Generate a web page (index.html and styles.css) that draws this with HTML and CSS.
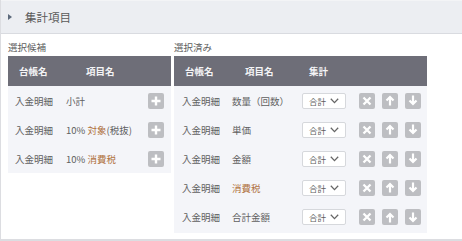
FILE: index.html
```html
<!DOCTYPE html>
<html>
<head>
    <title>集計項目</title>
    <meta charset="utf-8">
    <link rel="stylesheet" href="styles.css">
</head>

<body>
    <div class="panel">
        <div class="panel-head"><span class="caret"></span>集計項目</div>
        <div class="panel-body">
            <div class="pick">
                <div class="pick-label">選択候補</div>
                <table class="grid candidates">
                    <colgroup>
                        <col style="width: 51px">
                        <col style="width: 81px">
                        <col style="width: 31px">
                    </colgroup>
                    <tr>
                        <th class="c-ledger">台帳名</th>
                        <th class="c-item">項目名</th>
                        <th></th>
                    </tr>
                    <tr>
                        <td>入金明細</td>
                        <td>小計</td>
                        <td class="c-add"><button class="btn" type="button"><svg width="10" height="10" viewBox="0 0 10 10"><path d="M5 0.5V9.5M0.5 5H9.5" stroke="#fff" stroke-width="2.4"/></svg></button></td>
                    </tr>
                    <tr>
                        <td>入金明細</td>
                        <td>10% <span class="hl">対象</span>(税抜)</td>
                        <td class="c-add"><button class="btn" type="button"><svg width="10" height="10" viewBox="0 0 10 10"><path d="M5 0.5V9.5M0.5 5H9.5" stroke="#fff" stroke-width="2.4"/></svg></button></td>
                    </tr>
                    <tr>
                        <td>入金明細</td>
                        <td>10% <span class="hl">消費税</span></td>
                        <td class="c-add"><button class="btn" type="button"><svg width="10" height="10" viewBox="0 0 10 10"><path d="M5 0.5V9.5M0.5 5H9.5" stroke="#fff" stroke-width="2.4"/></svg></button></td>
                    </tr>
                </table>
            </div>

            <div class="pick">
                <div class="pick-label">選択済み</div>
                <table class="grid selected" id="selectedTable">
                    <colgroup>
                        <col style="width: 50px">
                        <col style="width: 70px">
                        <col style="width: 61px">
                        <col style="width: 72px">
                    </colgroup>
                    <tr>
                        <th class="c-ledger">台帳名</th>
                        <th class="c-item2">項目名</th>
                        <th class="c-sum">集計</th>
                        <th></th>
                    </tr>
                </table>
            </div>
        </div>
    </div>

    <script>
        var items = [
            ['入金明細', '数量（回数）'],
            ['入金明細', '単価'],
            ['入金明細', '金額'],
            ['入金明細', '<span class="hl">消費税</span>'],
            ['入金明細', '合計金額']
        ];

        var chevron = '<svg width="9" height="6" viewBox="0 0 9 6"><path d="M0.8 0.8L4.5 4.6L8.2 0.8" fill="none" stroke="#666" stroke-width="1.3"/></svg>';
        var del = '<svg width="10" height="10" viewBox="0 0 10 10"><path d="M1.5 1.5L8.5 8.5M8.5 1.5L1.5 8.5" stroke="#fff" stroke-width="2.3"/></svg>';
        var up = '<svg width="10" height="11" viewBox="0 0 10 11"><path d="M5 10.5V2.5M1.5 5.5L5 2L8.5 5.5" fill="none" stroke="#fff" stroke-width="2.2"/></svg>';
        var down = '<svg width="10" height="11" viewBox="0 0 10 11"><path d="M5 0.5V8.5M1.5 5.5L5 9L8.5 5.5" fill="none" stroke="#fff" stroke-width="2.2"/></svg>';

        var table = document.getElementById('selectedTable');
        for (var i = 0; i < items.length; i++) {
            var row = table.insertRow(table.rows.length);
            row.insertCell(0).innerHTML = items[i][0];
            row.insertCell(1).innerHTML = items[i][1];
            var sum = row.insertCell(2);
            sum.innerHTML = '<span class="select">合計' + chevron + '</span>';
            var ops = row.insertCell(3);
            ops.className = 'c-ops';
            ops.innerHTML = '<button class="btn" type="button">' + del + '</button>'
                + '<button class="btn" type="button">' + up + '</button>'
                + '<button class="btn" type="button">' + down + '</button>';
        }
    </script>
</body>
</html>
```

FILE: styles.css
```css
body {
    margin: 0;
    font-family: "Noto Sans CJK JP", "Noto Sans", sans-serif;
    color: #606060;
}

.panel {
    height: 241px;
    box-sizing: border-box;
    border-left: 1px solid #dcdde1;
    border-bottom: 2px solid #dcdde1;
}

.panel-head {
    height: 32px;
    border-top: 1px solid #f3f4f6;
    border-bottom: 1px solid #d9dbe0;
    background-color: #eceef2;
    display: flex;
    align-items: center;
    font-size: 11.5px;
    color: #5a5a5a;
}

.caret {
    width: 0;
    height: 0;
    margin: 0 13px 0 7px;
    border-top: 3px solid transparent;
    border-bottom: 3px solid transparent;
    border-left: 4px solid #5d6a7c;
}

.panel-body {
    display: flex;
    gap: 3px;
    padding: 6px 0 0 7px;
}

.pick-label {
    font-size: 9.5px;
    line-height: 14px;
    margin-bottom: 2px;
}

.grid {
    border-collapse: collapse;
    table-layout: fixed;
    background-color: #f4f5f9;
    font-size: 9.5px;
}

.candidates {
    width: 163px;
}

.selected {
    width: 253px;
}

.grid th {
    height: 30px;
    padding: 0;
    background-color: #6e6e78;
    color: #f4f4f6;
    font-weight: bold;
    text-align: left;
}

.grid td {
    height: 29px;
    padding: 0 0 0 7px;
    white-space: nowrap;
}

.selected td {
    padding-left: 8px;
}

.selected tr:last-child td {
    height: 31px;
    padding-bottom: 1px;
    box-sizing: border-box;
}

.c-ledger {
    padding-left: 11px !important;
}

.c-item {
    padding-left: 27px !important;
}

.c-item2 {
    padding-left: 21px !important;
}

.c-sum {
    padding-left: 15px !important;
}

.hl {
    color: #b0723f;
}

.grid td.c-add {
    padding-left: 8px;
}

.grid td.c-ops {
    padding-left: 4px;
}

.btn {
    width: 16px;
    height: 16px;
    padding: 0;
    border: none;
    border-radius: 2px;
    background-color: #bdbec2;
    display: inline-flex;
    align-items: center;
    justify-content: center;
    vertical-align: middle;
}

.c-ops .btn + .btn {
    margin-left: 7px;
}

.select {
    width: 44px;
    height: 16px;
    box-sizing: border-box;
    border: 1px solid #d6d8dc;
    border-radius: 2px;
    background-color: #fff;
    display: inline-flex;
    align-items: center;
    gap: 4px;
    padding-left: 6px;
    font-size: 8.5px;
    vertical-align: middle;
}
```
